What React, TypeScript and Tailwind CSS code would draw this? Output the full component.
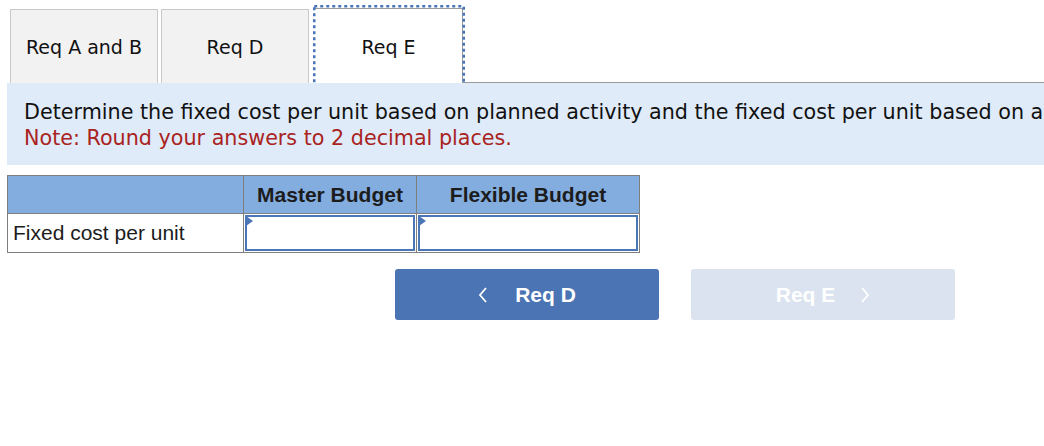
import React from "react";

function Tab({ label, active }: { label: string; active?: boolean }) {
  if (active) {
    return (
      <div className="relative ml-[3px] flex h-[76px] w-[148px] items-center justify-center border-t border-r border-[#9a9a9a] bg-white text-[19px] text-[#111]">
        <svg className="pointer-events-none absolute left-[-2px] top-[-4px]" width="152" height="83" viewBox="0 0 152 83">
          <rect x="1.25" y="1.25" width="149.5" height="80.5" fill="none" stroke="#4a76b8" strokeWidth="2.5" strokeDasharray="3 3" />
        </svg>
        <span className="pt-[1px]">{label}</span>
      </div>
    );
  }
  return (
    <div className="mr-[3px] flex h-[75px] w-[148px] items-center justify-center border border-b-0 border-[#c8c8c8] bg-[#f2f2f2] text-[19px] text-[#111]">
      <span className="pt-[1px]">{label}</span>
    </div>
  );
}

export default function App() {
  return (
    <div className="h-[446px] w-[1044px] overflow-hidden bg-white font-['DejaVu_Sans',Verdana,sans-serif]">
      <div className="flex items-end pl-[10px] pt-[8px]">
        <Tab label="Req A and B" />
        <Tab label="Req D" />
        <Tab label="Req E" active />
        <div className="h-[2px] flex-1 border-b-2 border-[#9a9a9a]" />
      </div>
      <div className="relative -z-0 mt-[-1px] ml-[7px] h-[82px] whitespace-nowrap bg-[#dfebf8] pl-[17px] pt-[16px] text-[20.7px] leading-[26px]">
        <div className="text-[#111]">
          Determine the fixed cost per unit based on planned activity and the fixed cost per unit based on actual activity.
        </div>
        <div className="text-[#a9231f]">Note: Round your answers to 2 decimal places.</div>
      </div>
      <div className="ml-[7px] mt-[10px] w-[633px] font-['Liberation_Sans',Arial,sans-serif]">
        <div className="flex h-[39px] border border-[#7f7f7f] bg-[#83acdf]">
          <div className="w-[236px] border-r border-[#7f7f7f]" />
          <div className="flex w-[173px] items-center justify-center border-r border-[#7f7f7f] text-[21px] font-bold text-[#1c1c1c]">
            Master Budget
          </div>
          <div className="flex flex-1 items-center justify-center text-[21px] font-bold text-[#1c1c1c]">
            Flexible Budget
          </div>
        </div>
        <div className="flex h-[39px] border border-t-0 border-[#7f7f7f] bg-white">
          <div className="flex w-[236px] items-center border-r border-[#7f7f7f] pl-[5px] text-[21px] text-[#1c1c1c]">
            Fixed cost per unit
          </div>
          <div className="relative w-[173px] border-r border-[#7f7f7f] p-[1px]">
            <div className="h-full w-full border-2 border-[#4a76b8] bg-white" />
            <div className="absolute left-[2px] top-[2px] h-0 w-0 border-y-[5px] border-l-[7px] border-y-transparent border-l-[#4a76b8]" />
          </div>
          <div className="relative flex-1 p-[1px]">
            <div className="h-full w-full border-2 border-[#4a76b8] bg-white" />
            <div className="absolute left-[2px] top-[2px] h-0 w-0 border-y-[5px] border-l-[7px] border-y-transparent border-l-[#4a76b8]" />
          </div>
        </div>
      </div>
      <div className="ml-[395px] mt-[16px] flex gap-[32px] font-['Liberation_Sans',Arial,sans-serif]">
        <div className="flex h-[51px] w-[264px] items-center justify-center gap-[27px] rounded-[3px] bg-[#4a74b4] text-[21px] font-bold text-white">
          <svg width="10" height="16" viewBox="0 0 10 16">
            <path d="M8 1 L2 8 L8 15" fill="none" stroke="white" strokeWidth="1.8" />
          </svg>
          <span>Req D</span>
        </div>
        <div className="flex h-[51px] w-[264px] items-center justify-center gap-[25px] rounded-[3px] bg-[#dae3ef] text-[21px] font-bold text-white">
          <span>Req E</span>
          <svg width="10" height="16" viewBox="0 0 10 16">
            <path d="M2 1 L8 8 L2 15" fill="none" stroke="white" strokeWidth="1.8" />
          </svg>
        </div>
      </div>
    </div>
  );
}
